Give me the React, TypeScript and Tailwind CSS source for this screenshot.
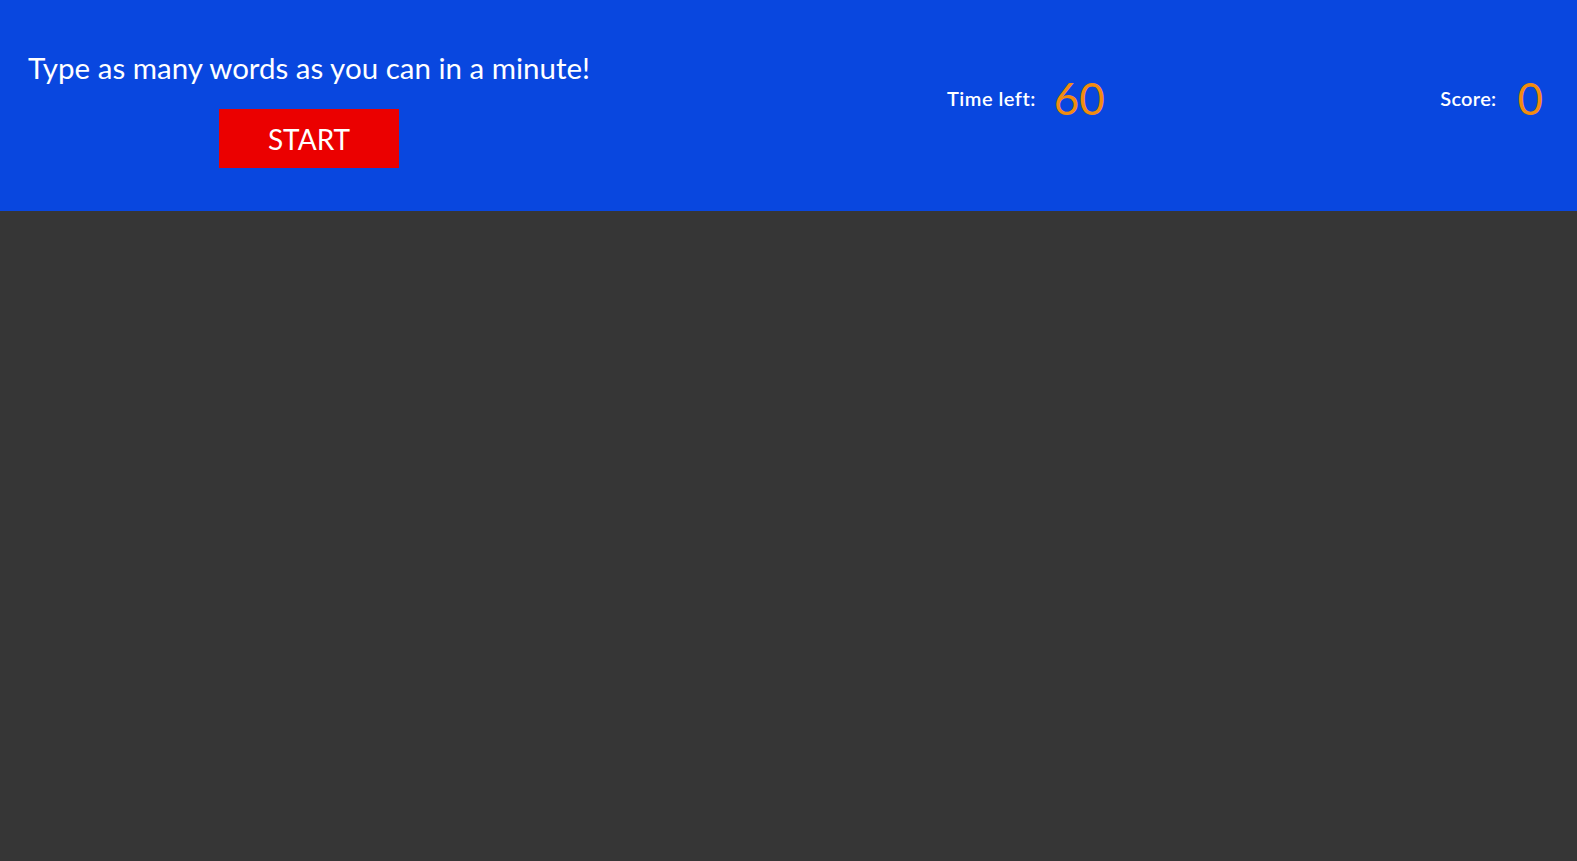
export default function App() {
  return (
    <div className="min-h-[861px] w-full bg-[#363636] font-['Lato','Noto_Sans',sans-serif]">
      {/* Header */}
      <div className="flex h-[211px] w-full items-start bg-[#0947df] text-white">
        <div className="ml-[27px] flex w-[564px] flex-col items-center pt-[50px]">
          <h1 className="whitespace-nowrap text-[29.5px] leading-[36px]">
            Type as many words as you can in a minute!
          </h1>
          <button className="mt-[23px] h-[59px] w-[180px] bg-[#eb0000] text-[28px] text-white">
            START
          </button>
        </div>

        <div className="ml-[356px] flex h-[196px] items-center gap-[18px]">
          <span className="text-[20px] font-semibold tracking-[0.5px]">Time left:</span>
          <span className="text-[44px] leading-none text-[#f28c0f]">60</span>
        </div>

        <div className="ml-auto mr-[34px] flex h-[196px] items-center gap-[21px]">
          <span className="text-[20px] font-semibold tracking-[0.3px]">Score:</span>
          <span className="text-[44px] leading-none text-[#f28c0f]">0</span>
        </div>
      </div>
    </div>
  );
}
